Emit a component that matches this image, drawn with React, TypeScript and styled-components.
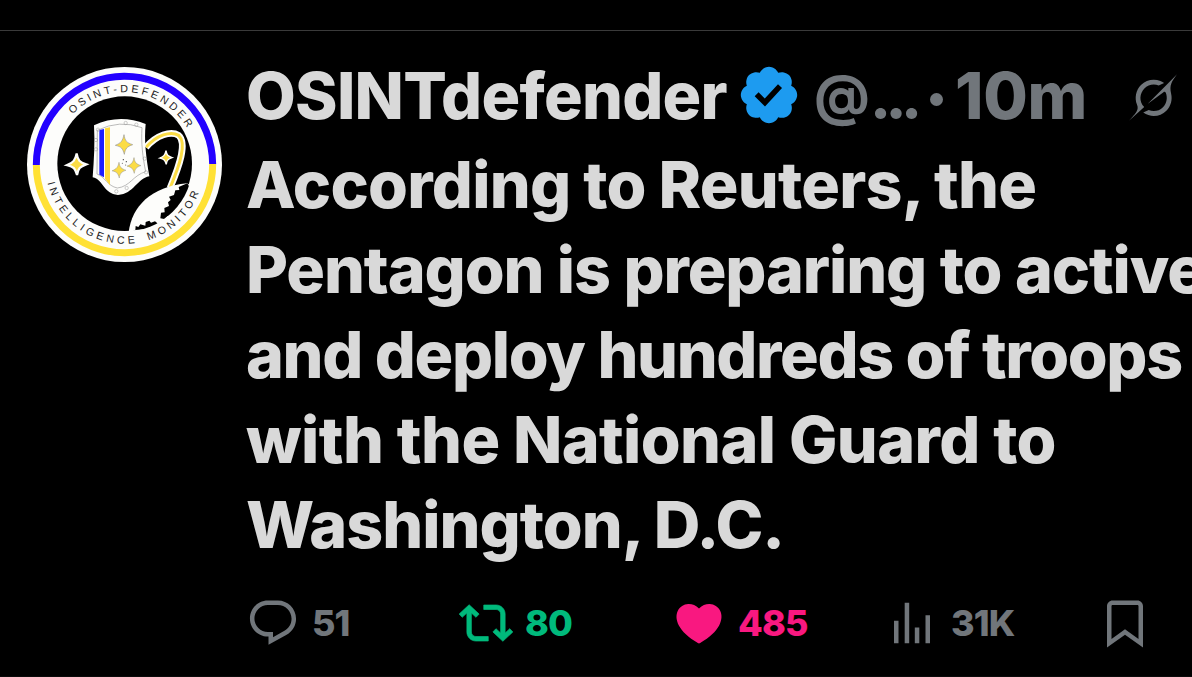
import React from 'react'
import styled, { createGlobalStyle } from 'styled-components'

const ICONS = {
	reply: 'M1.751 10c0-4.42 3.584-8 8.005-8h4.366c4.49 0 8.129 3.64 8.129 8.13 0 2.96-1.607 5.68-4.196 7.11l-8.054 4.46v-3.69h-.067c-4.49.1-8.183-3.51-8.183-8.01zm8.005-6c-3.317 0-6.005 2.69-6.005 6 0 3.37 2.77 6.08 6.138 6.01l.351-.01h1.761v2.3l5.087-2.81c1.951-1.08 3.163-3.13 3.163-5.36 0-3.39-2.744-6.13-6.129-6.13H9.756z',
	repost: 'M4.5 3.88l4.432 4.14-1.364 1.46L5.5 7.55V16c0 1.1.896 2 2 2H13v2H7.5c-2.209 0-4-1.79-4-4V7.55L1.432 9.48.068 8.02 4.5 3.88zM16.5 6H11V4h5.5c2.209 0 4 1.79 4 4v8.45l2.068-1.93 1.364 1.46-4.432 4.14-4.432-4.14 1.364-1.46 2.068 1.93V8c0-1.1-.896-2-2-2z',
	like: 'M20.884 13.19c-1.351 2.48-4.001 5.12-8.379 7.67l-.503.3-.504-.3c-4.379-2.55-7.029-5.19-8.382-7.67-1.36-2.5-1.41-4.86-.514-6.67.887-1.79 2.647-2.91 4.601-3.01 1.651-.09 3.368.56 4.798 2.01 1.429-1.45 3.146-2.1 4.796-2.01 1.954.1 3.714 1.22 4.601 3.01.896 1.81.846 4.17-.514 6.67z',
	views: 'M8.75 21V3h2v18h-2zM18 21V8.5h2V21h-2zM4 21l.004-10h2L6 21H4zm9.248 0v-7h2v7h-2z',
	bookmark:
		'M4 4.5C4 3.12 5.119 2 6.5 2h11C18.881 2 20 3.12 20 4.5v18.44l-8-5.71-8 5.71V4.5zM6.5 4c-.276 0-.5.22-.5.5v14.56l6-4.29 6 4.29V4.5c0-.28-.224-.5-.5-.5h-11z',
}

interface LineT {
	text: string
	spacing: number
	wordSpacing: number
}

const lines: LineT[] = [
	{ text: 'According to Reuters, the', spacing: -0.75, wordSpacing: -0.5 },
	{ text: 'Pentagon is preparing to active', spacing: -1.1, wordSpacing: 0.5 },
	{ text: 'and deploy hundreds of troops', spacing: -1.35, wordSpacing: 0 },
	{ text: 'with the National Guard to', spacing: -0.62, wordSpacing: 0 },
	{ text: 'Washington, D.C.', spacing: -1, wordSpacing: 0 },
]

interface ActionT {
	icon: keyof typeof ICONS
	count?: string
	color: string
	gap: number
	bold?: number
}

const actions: ActionT[] = [
	{ icon: 'reply', count: '51', color: '#71767b', gap: 12 },
	{ icon: 'repost', count: '80', color: '#00ba7c', gap: 12, bold: 0.3 },
	{ icon: 'like', count: '485', color: '#f91880', gap: 12 },
	{ icon: 'views', count: '31K', color: '#71767b', gap: 12 },
	{ icon: 'bookmark', color: '#71767b', gap: 0 },
]

const Avatar = () => (
	<AvatarSvg viewBox="21 21 585 585">
		<defs>
			<path id="topArc" d="M157.9 162.8A217 217 0 0 1 501.9 205" />
			<path id="bottomArc" d="M82.4 368.2A238 238 0 0 0 539 391" />
			<clipPath id="disc">
				<circle cx="314" cy="311" r="204" />
			</clipPath>
			<path
				id="spark"
				d="M0-29C3-10 8-5 26 1 9 7 4 12 1 30-4 12-8 7-26 3-9-4-4-10 0-29z"
			/>
		</defs>
		<circle cx="313.5" cy="313.5" r="292.5" fill="#fdfdfb" />
		<path d="M49 315A264.500 264.500 0 0 1 578 312" fill="none" stroke="#2300ff" strokeWidth="21" />
		<path d="M49 315A264.500 264.500 0 0 0 578 312" fill="none" stroke="#ffe135" strokeWidth="21" />
		<circle cx="314" cy="311" r="202" fill="#000" />

		<path
			d="M378 262C410 225 452 212 476 226C502 250 478 318 450 384"
			fill="none"
			stroke="#fdfdfb"
			strokeWidth="20"
		/>
		<path
			d="M378 262C410 225 452 212 476 226C502 250 478 318 450 384"
			fill="none"
			stroke="#fbdc45"
			strokeWidth="9"
		/>
		<g clipPath="url(#disc)">
			<path d="M326 516C336 440 392 380 502 370L540 400 500 480 410 530z" fill="#fdfdfb" />
			<path
				d="M502 370l-26 11 2 9-12 1-4 14-15 5 5 10-8 7 3 11-14 6 1 13-11 1-2 17 12 2 10-9 13-3 11-14 12-8 3-12 13-14 8-19 9-10z"
				fill="#000"
			/>
			<path d="M346 510l1-12 8 3 6-8 15 4 1-11 11-4 5 6 12-4 9 7-2 13z" fill="#000" />
		</g>
		<RingText>
			<textPath href="#topArc" textLength="400">
				OSINT-DEFENDER
			</textPath>
		</RingText>
		<RingText>
			<textPath href="#bottomArc" textLength="606">
				INTELLIGENCE MONITOR
			</textPath>
		</RingText>

		<path
			d="M222 196Q298 160 377 192C372 240 378 290 388 349C350 356 342 402 294 405C250 402 250 358 218 352C222 300 225 250 222 196z"
			fill="#fdfdfb"
		/>
		<path
			d="M232 211Q298 178 366 203C363 250 368 290 377 335C340 345 330 380 292 384C262 378 255 350 231 342z"
			fill="none"
			stroke="#999"
			strokeWidth="2"
		/>
		<path d="M238 210l14-3v145l-14-8z" fill="#1d1dff" />
		<path d="M255 205l15-3v174l-15-20z" fill="#ffd93a" />
		{[
			[234, 209],
			[228, 240],
			[228, 268],
			[317, 189],
			[349, 194],
			[374, 296],
			[378, 337],
			[289, 394],
			[320, 384],
		].map(([cx, cy]) => (
			<circle key={`${cx}-${cy}`} cx={cx} cy={cy} r="5" fill="none" stroke="#999" strokeWidth="1.500" />
		))}
		<Spark href="#spark" transform="translate(312 253)" />
		<Spark href="#spark" transform="translate(342 316) scale(.8)" />
		<Spark href="#spark" transform="translate(297 330) scale(.8)" />
		<g fill="#444">
			<circle cx="310" cy="299" r="2" />
			<circle cx="319" cy="305" r="2" />
			<circle cx="307" cy="310" r="1.500" />
			<circle cx="317" cy="315" r="1.500" />
		</g>
		<Spark href="#spark" transform="translate(170 312) scale(1.100)" $light />
		<Spark href="#spark" transform="translate(438 292) scale(.7)" $light />
	</AvatarSvg>
)

const Verified = () => (
	<VerifiedSvg viewBox="0 0 22 22">
		<path d="M20.396 11c-.018-.646-.215-1.275-.57-1.816-.354-.54-.852-.972-1.438-1.246.223-.607.27-1.264.14-1.897-.131-.634-.437-1.218-.882-1.687-.47-.445-1.053-.75-1.687-.882-.633-.13-1.29-.083-1.897.14-.273-.587-.704-1.086-1.245-1.44S11.647 1.62 11 1.604c-.646.017-1.273.213-1.813.568s-.969.854-1.24 1.44c-.608-.223-1.267-.272-1.902-.14-.635.13-1.22.436-1.69.882-.445.47-.749 1.055-.878 1.688-.13.633-.08 1.29.144 1.896-.587.274-1.087.705-1.443 1.245-.356.54-.555 1.17-.574 1.817.02.647.218 1.276.574 1.817.356.54.856.972 1.443 1.245-.224.606-.274 1.263-.144 1.896.13.634.433 1.218.877 1.688.47.443 1.054.747 1.687.878.633.132 1.29.084 1.897-.136.274.586.705 1.084 1.246 1.439.54.354 1.17.551 1.816.569.647-.016 1.276-.213 1.817-.567s.972-.854 1.245-1.44c.604.239 1.266.296 1.903.164.636-.132 1.22-.447 1.68-.907.46-.46.776-1.044.908-1.681s.075-1.299-.165-1.903c.586-.274 1.084-.705 1.439-1.246.354-.54.551-1.17.569-1.816zM9.662 14.85l-3.429-3.428 1.293-1.302 2.072 2.072 4.4-4.794 1.347 1.246z" />
	</VerifiedSvg>
)

const Grok = () => (
	<GrokSvg viewBox="0 0 33 32">
		<path d="M12.745 20.54l10.97-8.19c.539-.4 1.307-.244 1.564.38 1.349 3.288.746 7.241-1.938 9.955-2.683 2.714-6.417 3.31-9.83 1.954l-3.728 1.745c5.347 3.697 11.84 2.782 15.898-1.324 3.219-3.255 4.216-7.692 3.284-11.693l.008.009c-1.351-5.878.332-8.227 3.782-13.031L33 0l-4.54 4.59v-.014L12.743 20.544m-2.263 1.987c-3.837-3.707-3.175-9.446.1-12.755 2.42-2.449 6.388-3.448 9.852-1.979l3.72-1.737c-.67-.49-1.53-1.017-2.515-1.387-4.455-1.854-9.789-.931-13.41 2.728-3.483 3.523-4.579 8.94-2.697 13.561 1.405 3.454-.899 5.898-3.22 8.364C1.49 30.2.666 31.074 0 32l10.478-9.466" />
	</GrokSvg>
)

export default function App() {
	return (
		<>
			<GlobalStyle />
			<Page>
				<Post>
					<Avatar />
					<Content>
						<Header>
							<Name>OSINTdefender</Name>
							<Verified />
							<Handle>
								<At>@</At>...
							</Handle>
							<Dot />
							<Time>10m</Time>
							<Grok />
						</Header>
						<Body>
							{lines.map((line) => (
								<Line key={line.text} $spacing={line.spacing} $wordSpacing={line.wordSpacing}>
									{line.text}
								</Line>
							))}
						</Body>
						<Actions>
							{actions.map((action) => (
								<Action key={action.icon} $color={action.color} $gap={action.gap}>
									<ActionIcon viewBox="0 0 24 24" $bold={action.bold}>
										<path d={ICONS[action.icon]} />
									</ActionIcon>
									{action.count && <Count>{action.count}</Count>}
								</Action>
							))}
						</Actions>
					</Content>
				</Post>
			</Page>
		</>
	)
}

const GlobalStyle = createGlobalStyle`
	* {
		box-sizing: border-box;
	}
	body {
		margin: 0;
		background-color: #000;
		font-family: Inter, 'Liberation Sans', sans-serif;
	}
`

const Page = styled.div`
	height: 677px;
	padding-top: 30px;
	overflow: hidden;
	background-color: #000;
`

const Post = styled.article`
	display: flex;
	height: 647px;
	padding-left: 27px;
	border-top: 1px solid #3a3a3a;
	border-bottom: 1px solid #0a0a0a;
`

const AvatarSvg = styled.svg`
	flex: none;
	width: 195px;
	height: 195px;
	margin-top: 36px;
`

const RingText = styled.text`
	font-family: 'Liberation Sans', sans-serif;
	font-size: 32px;
	word-spacing: 10px;
	fill: #222;
`

const Spark = styled.use<{ $light?: boolean }>`
	fill: #fbdc45;
	stroke: ${({ $light }) => ($light ? '#fdfdfb' : '#999')};
	stroke-width: ${({ $light }) => ($light ? 6 : 2)};
`

const Content = styled.div`
	flex: none;
	width: 970px;
	margin-left: 24px;
`

const Header = styled.header`
	display: flex;
	align-items: center;
	height: 85px;
	margin-top: 23px;
	font-size: 64.500px;
	font-weight: 800;
	line-height: 85px;
	white-space: nowrap;
	color: #71767b;
`

const Name = styled.span`
	flex: none;
	width: 490px;
	letter-spacing: -0.75px;
	color: #d9d9d9;
`

const VerifiedSvg = styled.svg`
	flex: none;
	width: 66px;
	height: 66px;
	margin-top: -3px;
	fill: #1d9bf0;
`

const Handle = styled.span`
	flex: none;
	width: 116px;
	margin-left: 12px;
	font-size: 60px;
	letter-spacing: -5.600px;
`

const At = styled.span`
	font-size: 55px;
	font-weight: 700;
	letter-spacing: 0;
	vertical-align: 3px;
	line-height: 1;
`

const Dot = styled.span`
	flex: none;
	width: 13px;
	height: 13px;
	margin-top: 6px;
	border-radius: 50%;
	background-color: #71767b;
`

const Time = styled.span`
	flex: none;
	width: 174px;
	margin-left: 12px;
	letter-spacing: -0.3px;
`

const GrokSvg = styled.svg`
	flex: none;
	width: 48px;
	height: 47px;
	margin-top: 2px;
	fill: #71767b;
`

const Body = styled.div`
	margin-top: 4px;
	font-size: 64.500px;
	font-weight: 800;
	line-height: 85px;
	color: #d9d9d9;
`

const Line = styled.div<{ $spacing: number; $wordSpacing: number }>`
	white-space: nowrap;
	letter-spacing: ${({ $spacing }) => $spacing}px;
	word-spacing: ${({ $wordSpacing }) => $wordSpacing}px;
`

const Actions = styled.div`
	display: flex;
	margin-top: 28px;
`

const Action = styled.div<{ $color: string; $gap: number }>`
	display: flex;
	flex: none;
	align-items: center;
	gap: ${({ $gap }) => $gap}px;
	width: 213px;
	color: ${({ $color }) => $color};
`

const ActionIcon = styled.svg<{ $bold?: number }>`
	flex: none;
	width: 54px;
	height: 54px;
	fill: currentColor;
	stroke: currentColor;
	stroke-width: ${({ $bold }) => $bold || 0};
`

const Count = styled.span`
	font-size: 36px;
	font-weight: 800;
	line-height: 54px;
	letter-spacing: -0.9px;
`
